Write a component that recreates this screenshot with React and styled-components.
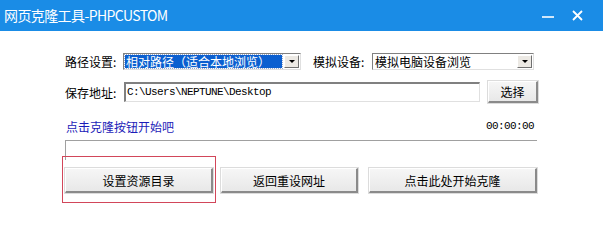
import React from "react";
import styled, { createGlobalStyle } from "styled-components";

const Global = createGlobalStyle`
  html, body { margin: 0; padding: 0; background: #fff; }
  body { width: 603px; height: 244px; overflow: hidden; font-family: "Noto Sans CJK SC", "Noto Sans", sans-serif; }
`;

const Window = styled.div`
  width: 603px;
  height: 244px;
  background: #fff;
  display: flex;
  flex-direction: column;
`;

const TitleBar = styled.div`
  height: 31px;
  background: #1a8ce6;
  display: flex;
  align-items: center;
  justify-content: space-between;
  padding: 0 20px 0 4px;
  color: #fff;
`;

const Title = styled.div`
  font-family: "Noto Sans CJK SC", sans-serif;
  font-size: 14px;
  letter-spacing: -0.6px;
  line-height: 31px;
`;

const Controls = styled.div`
  display: flex;
  align-items: center;
  gap: 18px;
`;

const Content = styled.div`
  padding: 22px 0 0 65px;
  width: 472px;
  display: flex;
  flex-direction: column;
`;

const Row = styled.div`
  display: flex;
  align-items: center;
  height: ${(p) => p.h}px;
  margin-bottom: ${(p) => p.mb || 0}px;
`;

const Label = styled.span`
  font-size: 12px;
  color: #000;
  width: ${(p) => p.w}px;
  margin-left: ${(p) => p.ml || 0}px;
  white-space: nowrap;
  flex: none;
`;

const Select = styled.div`
  width: ${(p) => p.w}px;
  height: 17px;
  box-sizing: border-box;
  border-top: 1px solid #808080;
  border-left: 1px solid #808080;
  border-right: 1px solid #e0e0e0;
  border-bottom: 1px solid #e0e0e0;
  background: #fff;
  display: flex;
  align-items: center;
  padding: 1px;
  flex: none;
`;

const SelectText = styled.div`
  flex: 1;
  height: 13px;
  line-height: 13px;
  font-size: 12px;
  padding-left: 1px;
  background: ${(p) => (p.active ? "#0b5fd0" : "transparent")};
  color: ${(p) => (p.active ? "#fff" : "#000")};
  outline: ${(p) => (p.active ? "1px dotted #9ac" : "none")};
  white-space: nowrap;
`;

const Arrow = styled.div`
  width: 15px;
  height: 13px;
  margin-left: 2px;
  box-sizing: border-box;
  background: #ece9e4;
  border-top: 1px solid #fff;
  border-left: 1px solid #fff;
  border-right: 1px solid #707070;
  border-bottom: 1px solid #707070;
  display: flex;
  align-items: center;
  justify-content: center;
  &::after {
    content: "";
    border-left: 3px solid transparent;
    border-right: 3px solid transparent;
    border-top: 3px solid #000;
  }
`;

const Input = styled.div`
  width: 356px;
  height: 20px;
  box-sizing: border-box;
  border-top: 2px solid #808080;
  border-left: 2px solid #808080;
  border-right: 1px solid #e0e0e0;
  border-bottom: 1px solid #e0e0e0;
  font-family: "Liberation Mono", monospace;
  font-size: 11px;
  letter-spacing: -0.6px;
  line-height: 17px;
  padding-left: 1px;
  color: #000;
  flex: none;
`;

const Button = styled.div`
  position: relative;
  width: ${(p) => p.w}px;
  height: ${(p) => p.h}px;
  margin-left: ${(p) => p.ml || 0}px;
  box-sizing: border-box;
  background: linear-gradient(#f6f6f6, #e8e8e8);
  border-top: 1px solid #ffffff;
  border-left: 1px solid #ffffff;
  border-right: 2px solid #8a8a8a;
  border-bottom: 2px solid #8a8a8a;
  box-shadow: 0 0 0 1px #dcdcdc;
  font-size: 12px;
  color: #000;
  display: flex;
  align-items: center;
  justify-content: center;
  flex: none;
`;

const Highlight = styled.div`
  position: absolute;
  top: -13px;
  left: -4px;
  right: -5px;
  bottom: -12px;
  border: 1px solid #d2465a;
  pointer-events: none;
`;

const StatusRow = styled.div`
  display: flex;
  justify-content: space-between;
  align-items: center;
  height: 16px;
  margin-top: 15px;
  padding-left: 1px;
`;

const Status = styled.span`
  font-size: 12px;
  color: #1c1cb8;
`;

const Timer = styled.span`
  font-family: "Liberation Mono", monospace;
  font-size: 11px;
  letter-spacing: -0.6px;
  color: #000;
  margin-right: 3px;
`;

const Progress = styled.div`
  margin-top: 6px;
  height: 19px;
  border-top: 1px solid #a0a0a0;
  border-left: 1px solid #a0a0a0;
`;

const ButtonRow = styled.div`
  display: flex;
  align-items: center;
  margin-top: 8px;
`;

export default function App() {
  return (
    <>
      <Global />
      <Window>
        <TitleBar>
          <Title>网页克隆工具-PHPCUSTOM</Title>
          <Controls>
            <svg width="12" height="12" viewBox="0 0 12 12">
              <line x1="0" y1="7" x2="12" y2="7" stroke="#fff" strokeWidth="1.6" />
            </svg>
            <svg width="11" height="11" viewBox="0 0 11 11">
              <path d="M1 1 L10 10 M10 1 L1 10" stroke="#fff" strokeWidth="1.8" />
            </svg>
          </Controls>
        </TitleBar>
        <Content>
          <Row h={17} mb={11}>
            <Label w={58}>路径设置:</Label>
            <Select w={178}>
              <SelectText active>相对路径（适合本地浏览）</SelectText>
              <Arrow />
            </Select>
            <Label w={59} ml={12}>模拟设备:</Label>
            <Select w={162}>
              <SelectText>模拟电脑设备浏览</SelectText>
              <Arrow />
            </Select>
          </Row>
          <Row h={22}>
            <Label w={59}>保存地址:</Label>
            <Input>C:\Users\NEPTUNE\Desktop</Input>
            <Button w={50} h={22} ml={8}>选择</Button>
          </Row>
          <StatusRow>
            <Status>点击克隆按钮开始吧</Status>
            <Timer>00:00:00</Timer>
          </StatusRow>
          <Progress />
          <ButtonRow>
            <Button w={148} h={25}>
              设置资源目录
              <Highlight />
            </Button>
            <Button w={137} h={25} ml={8}>返回重设网址</Button>
            <Button w={168} h={25} ml={11}>点击此处开始克隆</Button>
          </ButtonRow>
        </Content>
      </Window>
    </>
  );
}
